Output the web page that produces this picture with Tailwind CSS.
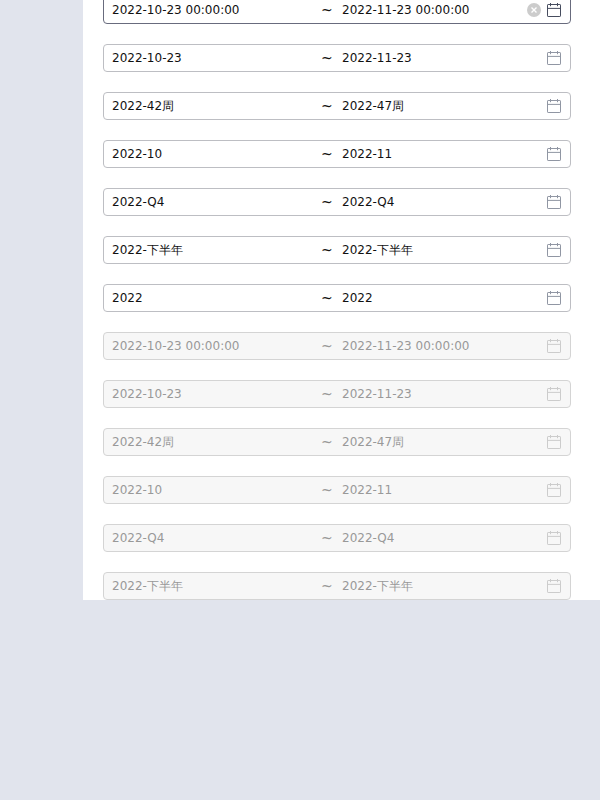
<!DOCTYPE html>
<html lang="zh">
<head>
<meta charset="utf-8">
<title>Date range</title>
<script src="https://cdn.jsdelivr.net/npm/@tailwindcss/browser@4"></script>
</head>
<body class="h-[800px] overflow-hidden bg-[#e1e4ed]">
<main id="list" class="ml-[83px] flex h-[600px] flex-col justify-end gap-5 overflow-hidden bg-white pl-5 pr-[29px] font-['DejaVu_Sans',sans-serif] text-xs"></main>

<template id="row">
  <div class="flex h-7 shrink-0 items-center rounded border pl-2 pr-[9px]">
    <span data-start class="w-[209px] leading-[18px]"></span>
    <span class="w-[21px] text-sm leading-[18px]">~</span>
    <span data-end class="flex-1 leading-[18px]"></span>
    <svg data-clear class="mr-[6px] size-[14px]" viewBox="0 0 14 14">
      <circle cx="7" cy="7" r="7" fill="#cccccc"/>
      <path d="M4.5 4.5l5 5M9.5 4.5l-5 5" stroke="#fff" stroke-width="1.4"/>
    </svg>
    <svg data-calendar class="size-[14px]" viewBox="0 0 14 14" fill="none" stroke="currentColor" stroke-width="1">
      <rect x=".5" y="1.5" width="13" height="12" rx=".6"/>
      <path d="M.5 5.4h13M3.5 0v3.2M10.5 0v3.2"/>
    </svg>
  </div>
</template>

<script>
const styles = {
  hover: { box: ['border-[#686b7d]', 'text-[#111111]'], icon: 'text-[#464c5e]' },
  normal: { box: ['border-[#bdbec3]', 'text-[#111111]'], icon: 'text-[#9096a3]' },
  disabled: { box: ['border-[#d4d4d4]', 'bg-[#f7f7f7]', 'text-[#999999]'], icon: 'text-[#cccccc]' },
};
const ranges = [
  ['2022-10-23 00:00:00', '2022-11-23 00:00:00'],
  ['2022-10-23', '2022-11-23'],
  ['2022-42周', '2022-47周'],
  ['2022-10', '2022-11'],
  ['2022-Q4', '2022-Q4'],
  ['2022-下半年', '2022-下半年'],
  ['2022', '2022'],
];
const list = document.getElementById('list');
const template = document.getElementById('row');
function addRow([start, end], state) {
  const row = template.content.firstElementChild.cloneNode(true);
  row.classList.add(...styles[state].box);
  row.querySelector('[data-start]').textContent = start;
  row.querySelector('[data-end]').textContent = end;
  row.querySelector('[data-calendar]').classList.add(styles[state].icon);
  if (state !== 'hover') row.querySelector('[data-clear]').remove();
  list.append(row);
}
ranges.forEach((range, i) => addRow(range, i === 0 ? 'hover' : 'normal'));
ranges.slice(0, 6).forEach(range => addRow(range, 'disabled'));
</script>
</body>
</html>
